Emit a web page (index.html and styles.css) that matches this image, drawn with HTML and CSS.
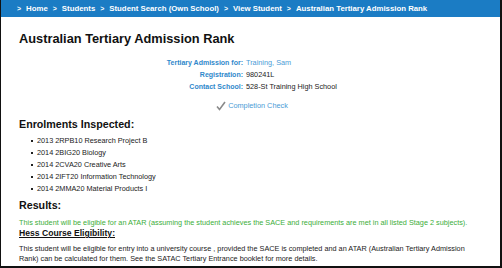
FILE: index.html
```html
<!DOCTYPE html>
<html lang="en">
<head>
  <meta charset="UTF-8">
  <title>Australian Tertiary Admission Rank</title>
  <link rel="stylesheet" href="styles.css">
</head>
<body>

  <div class="frame">
    <div class="crumbs">
      <span class="sep">&gt;</span>
      <span>Home</span>
      <span class="sep">&gt;</span>
      <span>Students</span>
      <span class="sep">&gt;</span>
      <span>Student Search (Own School)</span>
      <span class="sep">&gt;</span>
      <span>View Student</span>
      <span class="sep">&gt;</span>
      <span>Australian Tertiary Admission Rank</span>
    </div>

    <div class="content">
      <h2>Australian Tertiary Admission Rank</h2>

      <div class="info">
        <span class="label">Tertiary Admission for:</span>
        <span class="value link">Training, Sam</span>
        <span class="label">Registration:</span>
        <span class="value">980241L</span>
        <span class="label">Contact School:</span>
        <span class="value">528-St Training High School</span>
      </div>

      <div class="check">
        <svg width="10" height="10" viewBox="0 0 10 10">
          <polyline points="1,5.5 3.5,8.5 9,1" fill="none" stroke="#8a8a8a" stroke-width="1.6"/>
        </svg>
        <span>Completion Check</span>
      </div>

      <h3>Enrolments Inspected:</h3>
      <ul class="enrolments">
        <li>2013 2RPB10 Research Project B</li>
        <li>2014 2BIG20 Biology</li>
        <li>2014 2CVA20 Creative Arts</li>
        <li>2014 2IFT20 Information Technology</li>
        <li>2014 2MMA20 Material Products I</li>
      </ul>

      <h3 class="results">Results:</h3>
      <p class="ok">This student will be eligible for an ATAR (assuming the student achieves the SACE and requirements are met in all listed Stage 2 subjects).</p>

      <h4>Hess Course Eligibility:</h4>
      <p class="note">This student will be eligible for entry into a university course , provided the SACE is completed and an ATAR (Australian Tertiary Admission Rank) can be calculated for them. See the SATAC Tertiary Entrance booklet for more details.</p>
    </div>
  </div>

</body>
</html>
```

FILE: styles.css
```css
body {
  margin: 0;
  font-family: 'Liberation Sans', Arial, sans-serif;
  background-color: #fff;
}

.frame {
  width: 502px;
  height: 268px;
  box-sizing: border-box;
  border-left: 1px solid #111;
  border-right: 2px solid #111;
  border-bottom: 2px solid #111;
  overflow: hidden;
}

.crumbs {
  height: 17px;
  background-color: #1b7cc4;
  color: #fff;
  font-size: 7.8px;
  font-weight: bold;
  display: flex;
  align-items: center;
  gap: 5px;
  padding-left: 16px;
}

.crumbs .sep {
  font-size: 7px;
}

.content {
  padding-left: 18px;
  width: 460px;
  color: #222;
}

h2 {
  margin: 14px 0 0;
  font-size: 12.8px;
  line-height: 16px;
  color: #111;
}

.info {
  display: grid;
  grid-template-columns: 224px auto;
  column-gap: 3px;
  margin-top: 10px;
  font-size: 7.3px;
  line-height: 12px;
}

.info .label {
  text-align: right;
  font-weight: bold;
  color: #2f88cb;
  font-size: 7px;
}

.info .link {
  color: #4a9bd6;
}

.check {
  display: flex;
  align-items: center;
  justify-content: center;
  gap: 2px;
  margin-top: 7px;
  margin-left: 6px;
  font-size: 7.3px;
  line-height: 12px;
  color: #4a9bd6;
}

h3 {
  margin: 5px 0 0;
  font-size: 10.7px;
  line-height: 14px;
  color: #111;
}

.enrolments {
  list-style: none;
  margin: 4px 0 0;
  padding: 0;
  font-size: 7.3px;
  line-height: 12px;
}

.enrolments li {
  display: flex;
  align-items: center;
}

.enrolments li::before {
  content: "";
  width: 2px;
  height: 2px;
  background-color: #222;
  margin-left: 12px;
  margin-right: 4px;
}

h3.results {
  margin-top: 3px;
}

.ok {
  margin: 6px 0 0;
  font-size: 7.3px;
  line-height: 10px;
  color: #3cae3a;
  white-space: nowrap;
}

h4 {
  margin: 0;
  font-size: 8.6px;
  line-height: 10px;
  color: #111;
  text-decoration: underline;
}

.note {
  margin: 6px 0 0;
  font-size: 7.3px;
  line-height: 9.5px;
}
```
